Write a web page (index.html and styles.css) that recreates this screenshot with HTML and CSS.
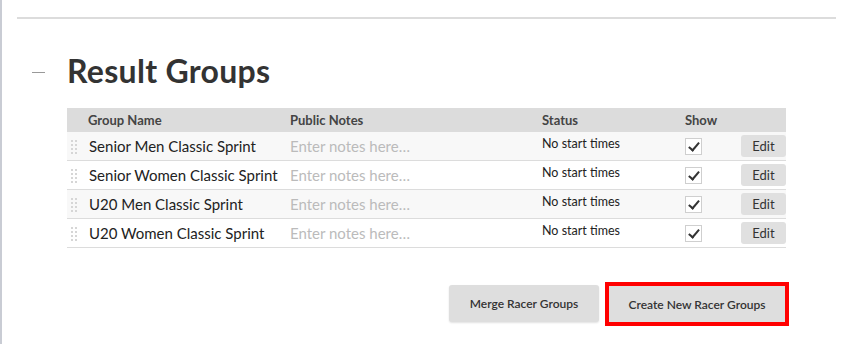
FILE: index.html
```html
<!DOCTYPE html>
<html lang="en">
  <head>
    <meta charset="UTF-8" />
    <meta name="viewport" content="width=device-width, initial-scale=1.0" />
    <title>Result Groups</title>
    <link rel="stylesheet" href="styles.css">
  </head>
  <body>
    <div class="page">
      <hr class="top-rule" />

      <div class="section-title">
        <span class="dash"></span>
        <h1>Result Groups</h1>
      </div>

      <div class="groups">
        <div class="row head">
          <span></span>
          <span>Group Name</span>
          <span>Public Notes</span>
          <span>Status</span>
          <span>Show</span>
          <span></span>
        </div>

        <div class="row">
          <span class="handle"></span>
          <span class="name">Senior Men Classic Sprint</span>
          <span class="notes">Enter notes here…</span>
          <span class="status">No start times</span>
          <span><span class="check"></span></span>
          <span><button class="edit-button">Edit</button></span>
        </div>
        <div class="row">
          <span class="handle"></span>
          <span class="name">Senior Women Classic Sprint</span>
          <span class="notes">Enter notes here…</span>
          <span class="status">No start times</span>
          <span><span class="check"></span></span>
          <span><button class="edit-button">Edit</button></span>
        </div>
        <div class="row">
          <span class="handle"></span>
          <span class="name">U20 Men Classic Sprint</span>
          <span class="notes">Enter notes here…</span>
          <span class="status">No start times</span>
          <span><span class="check"></span></span>
          <span><button class="edit-button">Edit</button></span>
        </div>
        <div class="row">
          <span class="handle"></span>
          <span class="name">U20 Women Classic Sprint</span>
          <span class="notes">Enter notes here…</span>
          <span class="status">No start times</span>
          <span><span class="check"></span></span>
          <span><button class="edit-button">Edit</button></span>
        </div>
      </div>

      <div class="actions">
        <button class="action-button">Merge Racer Groups</button>
        <button class="action-button highlighted">Create New Racer Groups</button>
      </div>
    </div>
  </body>
</html>
```

FILE: styles.css
```css
body {
  font-family: "Lato", "Noto Sans", sans-serif;
  margin: 0;
  background-color: #ffffff;
  color: #222;
}

.page {
  min-height: 100vh;
  box-sizing: border-box;
  border-left: 2px solid #c9ccd4;
  padding-top: 17px;
}

.top-rule {
  margin: 0 0 0 15px;
  width: 819px;
  border: none;
  border-top: 2px solid #dcdcdc;
}

.section-title {
  display: flex;
  align-items: center;
  margin-top: 31px;
  height: 40px;
}

.dash {
  width: 13px;
  height: 1px;
  background-color: #999;
  margin-left: 30px;
  margin-right: 22px;
  margin-top: 4px;
}

.section-title h1 {
  margin: 0;
  font-size: 32px;
  font-weight: 700;
  color: #333;
  letter-spacing: 0.3px;
}

/* Group table */
.groups {
  margin-left: 65px;
  margin-top: 18px;
  width: 719px;
}

.row {
  display: grid;
  grid-template-columns: 22px 201px 252px 143px 56px 45px;
  align-items: center;
  height: 28px;
  border-bottom: 1px solid #dcdcdc;
  font-size: 15px;
}

.row:nth-child(even) {
  background-color: #f8f8f8;
}

.row.head {
  height: 24px;
  border-bottom: none;
  background-color: #dcdcdc;
  font-size: 13px;
  font-weight: 700;
  color: #444;
}

.row.head span:nth-child(2) {
  margin-left: -1px;
}

.handle {
  width: 8px;
  height: 15px;
  margin-left: 3px;
  background-image: radial-gradient(circle, #d6d6d6 1px, transparent 1.2px);
  background-size: 4px 4px;
}

.name {
  color: #222;
  white-space: nowrap;
}

.notes {
  color: #bbb;
}

.status {
  font-size: 12.5px;
  color: #222;
  margin-top: -5px;
}

.check {
  display: block;
  position: relative;
  width: 15px;
  height: 15px;
  border: 1px solid #cfcfcf;
  background-color: #fff;
}

.check::after {
  content: "";
  position: absolute;
  left: 5px;
  top: 1px;
  width: 4px;
  height: 9px;
  border: solid #333;
  border-width: 0 2px 2px 0;
  transform: rotate(40deg);
}

.edit-button {
  display: block;
  width: 45px;
  height: 22px;
  padding: 0;
  border: none;
  border-radius: 3px;
  background-color: #e0e0e0;
  color: #333;
  font-family: inherit;
  font-size: 13px;
}

/* Bottom buttons */
.actions {
  display: flex;
  justify-content: flex-end;
  gap: 10px;
  width: 718px;
  margin-left: 65px;
  margin-top: 37px;
}

.action-button {
  height: 37px;
  padding: 0 10px;
  border: none;
  border-radius: 3px;
  background-color: #dedede;
  color: #333;
  font-family: inherit;
  font-size: 12px;
  font-weight: 600;
  white-space: nowrap;
  box-shadow: 0 1px 2px rgba(0, 0, 0, 0.12);
}

.action-button:first-child {
  width: 150px;
}

.highlighted {
  width: 176px;
  height: 36px;
  margin-top: 1px;
  border-radius: 0;
  outline: 4px solid #ff0000;
  box-shadow: none;
}
```
